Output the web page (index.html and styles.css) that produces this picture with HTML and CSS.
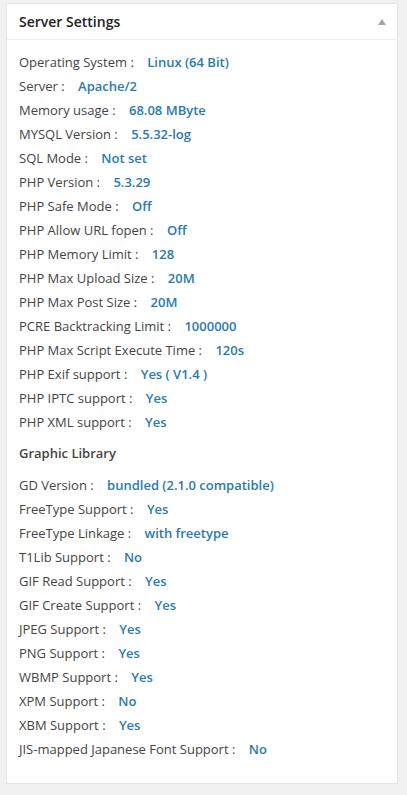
FILE: index.html
```
<!DOCTYPE html>
<html>
<head>
<meta charset="utf-8">
<link rel="stylesheet" href="styles.css">
</head>
<body>
<div class="postbox">
  <div class="hndle">
    <h2 class="title">Server Settings</h2>
    <span class="toggle"></span>
  </div>
  <div class="inside">
    <ul class="list">
      <li>Operating System : <span class="val">Linux&nbsp;(64&nbsp;Bit)</span></li>
      <li>Server : <span class="val">Apache/2</span></li>
      <li>Memory usage : <span class="val">68.08 MByte</span></li>
      <li>MYSQL Version : <span class="val">5.5.32-log</span></li>
      <li>SQL Mode : <span class="val">Not set</span></li>
      <li>PHP Version : <span class="val">5.3.29</span></li>
      <li>PHP Safe Mode : <span class="val">Off</span></li>
      <li>PHP Allow URL fopen : <span class="val">Off</span></li>
      <li>PHP Memory Limit : <span class="val">128</span></li>
      <li>PHP Max Upload Size : <span class="val">20M</span></li>
      <li>PHP Max Post Size : <span class="val">20M</span></li>
      <li>PCRE Backtracking Limit : <span class="val">1000000</span></li>
      <li>PHP Max Script Execute Time : <span class="val">120s</span></li>
      <li>PHP Exif support : <span class="val">Yes ( V1.4 )</span></li>
      <li>PHP IPTC support : <span class="val">Yes</span></li>
      <li>PHP XML support : <span class="val">Yes</span></li>
    </ul>
    <h3 class="sub">Graphic Library</h3>
    <ul class="list">
      <li>GD Version : <span class="val">bundled (2.1.0 compatible)</span></li>
      <li>FreeType Support : <span class="val">Yes</span></li>
      <li>FreeType Linkage : <span class="val">with freetype</span></li>
      <li>T1Lib Support : <span class="val">No</span></li>
      <li>GIF Read Support : <span class="val">Yes</span></li>
      <li>GIF Create Support : <span class="val">Yes</span></li>
      <li>JPEG Support : <span class="val">Yes</span></li>
      <li>PNG Support : <span class="val">Yes</span></li>
      <li>WBMP Support : <span class="val">Yes</span></li>
      <li>XPM Support : <span class="val">No</span></li>
      <li>XBM Support : <span class="val">Yes</span></li>
      <li>JIS-mapped Japanese Font Support : <span class="val">No</span></li>
    </ul>
  </div>
</div>
</body>
</html>
```
FILE: styles.css
```
html, body {
  margin: 0;
  padding: 0;
  background: #f1f1f1;
}
body {
  font-family: "Open Sans", sans-serif;
  font-size: 13px;
  color: #444;
  padding: 3px 10px 0 6px;
}
.postbox {
  background: #fff;
  border: 1px solid #e5e5e5;
  box-shadow: 0 1px 1px rgba(0,0,0,0.04);
  width: 390px;
  height: 779px;
  box-sizing: content-box;
}
.hndle {
  display: flex;
  align-items: center;
  justify-content: space-between;
  height: 35px;
  border-bottom: 1px solid #eee;
  padding: 0 11px 0 12px;
}
.title {
  margin: 0;
  font-size: 14px;
  font-weight: 600;
  color: #222;
  line-height: 1;
}
.toggle {
  width: 0;
  height: 0;
  border-left: 4px solid transparent;
  border-right: 4px solid transparent;
  border-bottom: 6px solid #a0a5aa;
  margin-top: 1px;
}
.inside {
  padding: 10px 12px 0 12px;
}
.list {
  list-style: none;
  margin: 0;
  padding: 0;
}
.list li {
  height: 24px;
  line-height: 24px;
  white-space: nowrap;
}
.val {
  font-weight: 600;
  color: #2a7ab0;
  margin-left: 10px;
}
.sub {
  margin: 10px 0 10px 0;
  font-size: 13px;
  font-weight: 600;
  color: #444;
  line-height: 19px;
}
```
